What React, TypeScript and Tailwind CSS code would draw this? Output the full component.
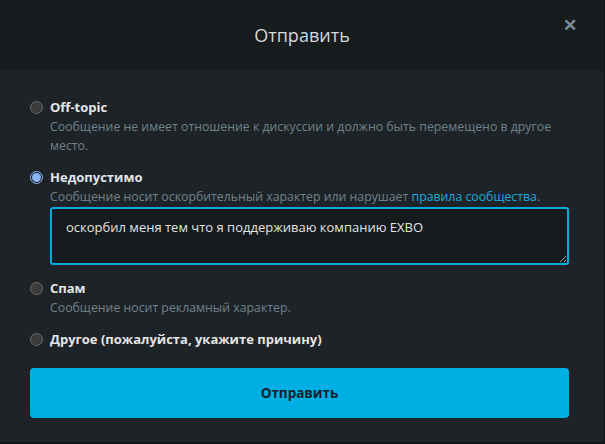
import React, { useState } from "react";

const options = [
  { id: "offtopic", label: "Off-topic", desc: "Сообщение не имеет отношение к дискуссии и должно быть перемещено в другое место." },
  { id: "bad", label: "Недопустимо", desc: "rules" },
  { id: "spam", label: "Спам", desc: "Сообщение носит рекламный характер." },
  { id: "other", label: "Другое (пожалуйста, укажите причину)", desc: "" },
];

const Radio = ({ checked }: { checked: boolean }) => (
  <span
    className={`mt-[4px] flex h-[13px] w-[13px] shrink-0 items-center justify-center rounded-full border ${
      checked ? "border-[#8ab4f8] bg-[#1c2024]" : "border-[#6b6b6b] bg-[#3b3b3b]"
    }`}
  >
    {checked && <span className="h-[9px] w-[9px] rounded-full bg-[#8ab4f8]" />}
  </span>
);

export default function App() {
  const [selected, setSelected] = useState("bad");
  const [text, setText] = useState("оскорбил меня тем что я поддерживаю компанию EXBO");

  return (
    <div className="h-[444px] w-[605px] bg-[#101416]" style={{ fontFamily: '"Open Sans", "Noto Sans", sans-serif' }}>
      <div className="flex h-[442px] w-[604px] flex-col overflow-hidden rounded-br-[3px] bg-[#1e2327]">
        <div className="relative flex h-[71px] items-center justify-center bg-[#171c1f]">
          <h2 className="text-[18px] text-[#d5d8da]">Отправить</h2>
          <button className="absolute right-[27px] top-[16px] text-[17px] font-bold leading-none text-[#7b8c95]">✕</button>
        </div>

        <div className="flex flex-col pl-[30px] pr-[35px] pt-[26px]">
          {options.map((o) => (
            <label key={o.id} className="flex cursor-pointer gap-[7px] pb-[12px]" onClick={() => setSelected(o.id)}>
              <Radio checked={selected === o.id} />
              <div className="flex flex-1 flex-col">
                <span className="text-[13px] font-bold leading-[20px] text-[#e4e6e7]">{o.label}</span>
                {o.desc === "rules" ? (
                  <span className="text-[12.3px] leading-[19px] text-[#6f828b]">
                    Сообщение носит оскорбительный характер или нарушает{" "}
                    <a className="text-[#1fa9dc]">правила сообщества</a>.
                  </span>
                ) : (
                  o.desc && <span className="text-[12.3px] leading-[19px] text-[#6f828b]">{o.desc}</span>
                )}
                {o.id === "bad" && (
                  <textarea
                    value={text}
                    onChange={(e) => setText(e.target.value)}
                    className="mb-[1px] mt-[1px] h-[58px] resize-y rounded-[3px] border-2 border-[#00a9e0] bg-[#151a1d] px-[14px] py-[9px] text-[13px] text-[#e2e4e5] outline-none"
                  />
                )}
              </div>
            </label>
          ))}
        </div>

        <div className="pl-[30px] pr-[35px] pt-[7px]">
          <button className="h-[50px] w-full rounded-[4px] bg-[#00afe3] text-[13.5px] font-bold text-[#15202a]">Отправить</button>
        </div>
      </div>
    </div>
  );
}
